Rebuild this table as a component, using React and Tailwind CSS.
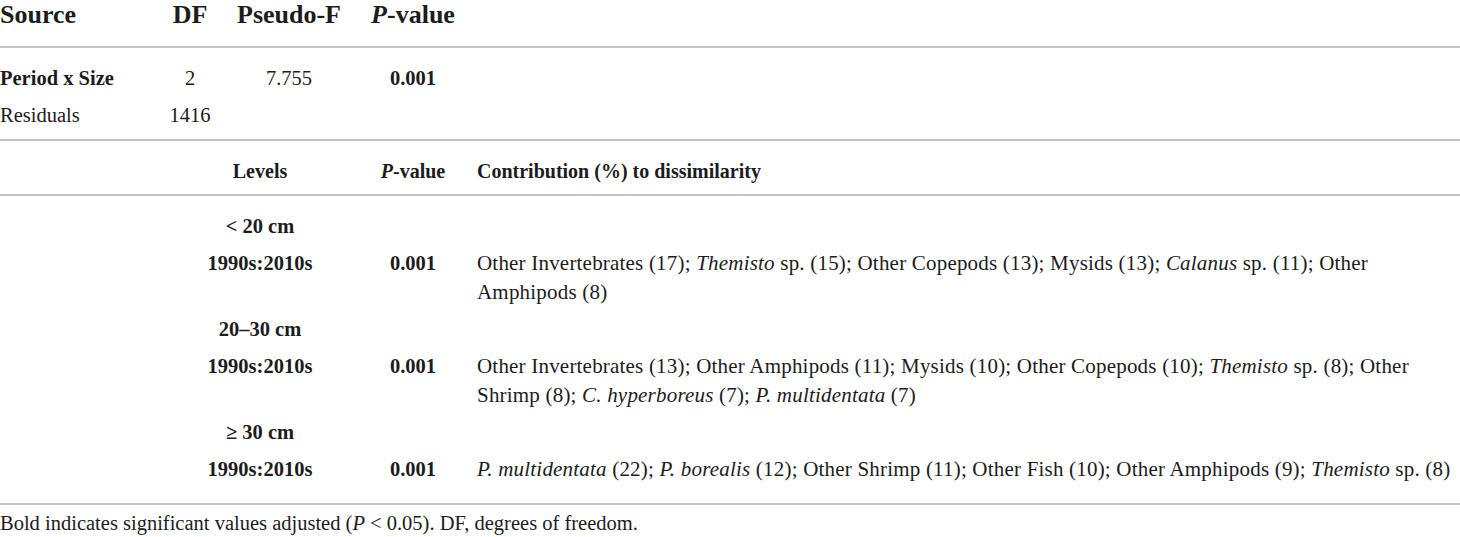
export default function App() {
  const rows = [
    {
      level: "< 20 cm",
    },
    {
      level: "1990s:2010s",
      p: "0.001",
      lines: [
        <>Other Invertebrates (17); <i>Themisto</i> sp. (15); Other Copepods (13); Mysids (13); <i>Calanus</i> sp. (11); Other</>,
        <>Amphipods (8)</>,
      ],
    },
    { level: "20–30 cm" },
    {
      level: "1990s:2010s",
      p: "0.001",
      lines: [
        <>Other Invertebrates (13); Other Amphipods (11); Mysids (10); Other Copepods (10); <i>Themisto</i> sp. (8); Other</>,
        <>Shrimp (8); <i>C. hyperboreus</i> (7); <i>P. multidentata</i> (7)</>,
      ],
    },
    { level: "≥ 30 cm" },
    {
      level: "1990s:2010s",
      p: "0.001",
      lines: [
        <><i>P. multidentata</i> (22); <i>P. borealis</i> (12); Other Shrimp (11); Other Fish (10); Other Amphipods (9); <i>Themisto</i> sp. (8)</>,
      ],
    },
  ];

  return (
    <div className="w-[1460px] h-[537px] overflow-hidden bg-white text-[#1c1c1c] font-['Liberation_Serif',serif]">
      {/* first table header */}
      <div className="grid grid-cols-[160px_60px_138px_110px] h-[46px] items-start text-[26px] font-bold leading-[30px]">
        <div>Source</div>
        <div className="text-center">DF</div>
        <div className="text-center">Pseudo-F</div>
        <div className="text-center">
          <i>P</i>-value
        </div>
      </div>
      <div className="h-[2px] bg-[#c4c4c4]" />

      <div className="pt-[12px] pb-[5px] text-[20.5px] leading-[29px]">
        <div className="grid grid-cols-[160px_60px_138px_110px] py-[4px]">
          <div className="font-bold">Period x Size</div>
          <div className="text-center">2</div>
          <div className="text-center">7.755</div>
          <div className="text-center font-bold">0.001</div>
        </div>
        <div className="grid grid-cols-[160px_60px_138px_110px] py-[4px]">
          <div>Residuals</div>
          <div className="text-center">1416</div>
          <div />
          <div />
        </div>
      </div>
      <div className="h-[2px] bg-[#c4c4c4]" />

      {/* second table header */}
      <div className="grid grid-cols-[150px_220px_86px_1fr] pt-[16px] pb-[8px] text-[20px] leading-[29px] font-bold">
        <div />
        <div className="text-center">Levels</div>
        <div className="text-center">
          <i>P</i>-value
        </div>
        <div className="pl-[21px]">Contribution (%) to dissimilarity</div>
      </div>
      <div className="h-[2px] bg-[#c4c4c4]" />

      <div className="pt-[12px] pb-[15px] text-[20.5px] leading-[29px]">
        {rows.map((r, i) => (
          <div key={i} className="grid grid-cols-[150px_220px_86px_1fr] py-[4px]">
            <div />
            <div className="text-center font-bold">{r.level}</div>
            <div className="text-center font-bold">{r.p}</div>
            <div className="pl-[21px] whitespace-nowrap text-[21px] tracking-[0.2px]">
              {r.lines &&
                r.lines.map((l, j) => <div key={j}>{l}</div>)}
            </div>
          </div>
        ))}
      </div>
      <div className="h-[2px] bg-[#c4c4c4]" />

      <div className="pt-[6px] text-[20.5px] leading-[24px]">
        Bold indicates significant values adjusted (<i>P</i> &lt; 0.05). DF, degrees of freedom.
      </div>
    </div>
  );
}
